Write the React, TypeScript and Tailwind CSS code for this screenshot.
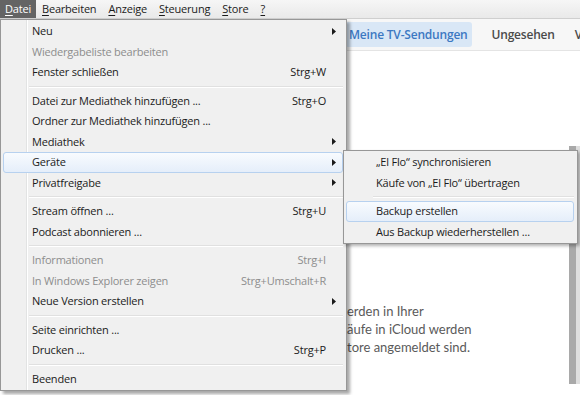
import React from "react";

type Item =
  | "sep"
  | {
      label: string;
      shortcut?: string;
      arrow?: boolean;
      disabled?: boolean;
      active?: boolean;
    };

const fileMenu: Item[] = [
  { label: "Neu", arrow: true },
  { label: "Wiedergabeliste bearbeiten", disabled: true },
  { label: "Fenster schließen", shortcut: "Strg+W" },
  "sep",
  { label: "Datei zur Mediathek hinzufügen ...", shortcut: "Strg+O" },
  { label: "Ordner zur Mediathek hinzufügen ..." },
  { label: "Mediathek", arrow: true },
  { label: "Geräte", arrow: true, active: true },
  { label: "Privatfreigabe", arrow: true },
  "sep",
  { label: "Stream öffnen ...", shortcut: "Strg+U" },
  { label: "Podcast abonnieren ..." },
  "sep",
  { label: "Informationen", shortcut: "Strg+I", disabled: true },
  { label: "In Windows Explorer zeigen", shortcut: "Strg+Umschalt+R", disabled: true },
  { label: "Neue Version erstellen", arrow: true },
  "sep",
  { label: "Seite einrichten ..." },
  { label: "Drucken ...", shortcut: "Strg+P" },
  "sep",
  { label: "Beenden" },
];

const deviceMenu: Item[] = [
  { label: "„El Flo“ synchronisieren" },
  { label: "Käufe von „El Flo“ übertragen" },
  "sep",
  { label: "Backup erstellen", active: true },
  { label: "Aus Backup wiederherstellen ..." },
];

function Arrow() {
  return (
    <svg width="4" height="7" viewBox="0 0 4 7" className="block">
      <path d="M0 0 L4 3.5 L0 7 Z" fill="#1a1a1a" />
    </svg>
  );
}

function MenuRows({ items }: { items: Item[] }) {
  return (
    <>
      {items.map((item, i) =>
        item === "sep" ? (
          <div key={i} className="h-[8px] flex flex-col justify-center pl-[28px] pr-[3px]">
            <div className="h-px bg-[#e0e0e0]" />
            <div className="h-px bg-white" />
          </div>
        ) : (
          <div
            key={i}
            className={
              "h-[20.5px] ml-[2px] mr-[3px] flex items-center pl-[28px] rounded-[3px] border " +
              (item.active
                ? "border-[#b7d1ef] bg-gradient-to-b from-[#f8fbfe] to-[#e5eefa]"
                : "border-transparent") +
              (item.disabled ? " text-[#8d8d8d]" : " text-[#1b1b1b]")
            }
          >
            <span className="flex-1 whitespace-nowrap">{item.label}</span>
            {item.shortcut && <span className="whitespace-nowrap">{item.shortcut}</span>}
            <span className="w-[16px] shrink-0 flex pl-[6px]">{item.arrow && <Arrow />}</span>
          </div>
        )
      )}
    </>
  );
}

function U({ c }: { c: string }) {
  return <span className="underline underline-offset-2 decoration-1">{c}</span>;
}

export default function App() {
  return (
    <div
      className="relative w-[580px] h-[395px] overflow-hidden bg-white text-[11px] tracking-[-0.2px]"
      style={{ fontFamily: "'Open Sans', 'Noto Sans', sans-serif" }}
    >
      {/* Menu bar */}
      <div className="h-[19px] flex items-stretch bg-gradient-to-b from-[#f6f6f6] to-[#e9e9e9] border-b border-[#cfcfcf] text-[#1b1b1b]">
        <div className="w-[36px] flex items-center justify-center bg-[#646464] text-white">
          <span>
            <U c="D" />atei
          </span>
        </div>
        <div className="flex items-center gap-[12px] pl-[6px]">
          <span>
            <U c="B" />earbeiten
          </span>
          <span>
            <U c="A" />nzeige
          </span>
          <span>
            <U c="S" />teuerung
          </span>
          <span>
            <U c="S" />tore
          </span>
          <span>
            <U c="?" />
          </span>
        </div>
      </div>

      {/* Tabs */}
      <div className="h-[32px] flex items-center pl-[345px] bg-[#f7f7f7] border-b border-[#e4e4e4] text-[12px] font-semibold whitespace-nowrap">
        <div className="h-[25px] px-[4px] flex items-center rounded-[3px] bg-[#d9e7f6] text-[#3c78c2]">
          Meine TV-Sendungen
        </div>
        <div className="ml-[20px] text-[#4a4a4a]">Ungesehen</div>
        <div className="ml-[20px] text-[#4a4a4a]">V</div>
      </div>

      {/* Content */}
      <div className="flex h-[343px]">
        <div
          className="flex-1 pt-[251px] text-[13px] leading-[18px] text-[#5a5a5a] whitespace-nowrap tracking-normal"
          style={{ fontFamily: "Lato, 'Open Sans', sans-serif" }}
        >
          <div className="flex">
            <span className="w-[347px] shrink-0 flex justify-end">w</span>
            <span>erden in Ihrer</span>
          </div>
          <div className="flex">
            <span className="w-[347px] shrink-0 flex justify-end">K</span>
            <span>äufe in iCloud werden</span>
          </div>
          <div className="flex">
            <span className="w-[347px] shrink-0 flex justify-end">S</span>
            <span>tore angemeldet sind.</span>
          </div>
        </div>
        <div className="w-[11px] flex">
          <div className="w-[7px] mt-[95px] mb-[10px] bg-[#a9a9a9]" />
          <div className="w-[4px] mt-[95px] mb-[10px] bg-[#dedede]" />
        </div>
      </div>

      {/* Datei menu */}
      <div className="absolute left-0 top-[19px] w-[347px] border border-[#979797] pt-[1px] pb-[1px] shadow-[3px_3px_3px_rgba(0,0,0,0.35)] bg-[linear-gradient(to_right,#f0f0f0_25px,#e2e3e3_25px,#e2e3e3_26px,#ffffff_26px,#ffffff_27px,#f0f0f0_27px)]">
        <MenuRows items={fileMenu} />
      </div>

      {/* Geräte submenu */}
      <div className="absolute left-[343px] top-[150px] w-[235px] border border-[#979797] pt-[1px] pb-[1px] shadow-[2px_2px_3px_rgba(0,0,0,0.3)] bg-[#f0f0f0]">
        <div className="[&>div]:pl-[29px]">
          <MenuRows items={deviceMenu} />
        </div>
      </div>
    </div>
  );
}
